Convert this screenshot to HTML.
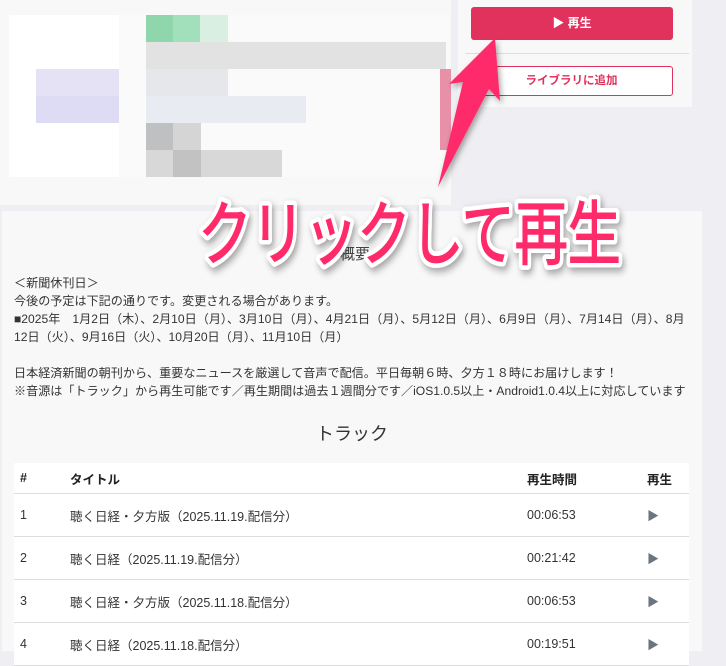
<!DOCTYPE html>
<html><head><meta charset="utf-8"><style>
body{margin:0;width:726px;height:648px;overflow:hidden;background:#eeeef3;font-family:"Liberation Sans","Noto Sans CJK JP",sans-serif;color:#333;position:relative}
.abs{position:absolute}
.card{background:#f8f8f8}
.c{position:absolute;width:28px;height:27px}
.txt{font-size:12.1px;line-height:18px;color:#333;white-space:nowrap}
table{border-collapse:collapse;background:#fff;font-size:12.5px;table-layout:fixed}
td,th{text-align:left;padding:0 6px;border-bottom:1px solid #ddd}
th{height:30px;font-weight:bold;color:#222}
td{height:42px}
.pl{color:#6b7580;font-size:12px}
</style></head><body>
<div class="abs card" style="left:0;top:0;width:451px;height:205px"></div>
<div class="abs card" style="left:458px;top:0;width:234px;height:107px"></div>
<div class="abs" style="left:9px;top:15px;width:440px;height:162px;background:#fafafa"></div>
<div class="c" style="left:9px;top:15px;width:110px;height:162px;background:#fff"></div>
<div class="c" style="left:146px;top:15px;background:#8fd6ad"></div>
<div class="c" style="left:173px;top:15px;background:#a2e0bc"></div>
<div class="c" style="left:200px;top:15px;background:#d9efe1"></div>
<div class="c" style="left:146px;top:42px;width:300px;background:#e2e2e2"></div>
<div class="c" style="left:36px;top:69px;width:83px;background:#e4e2f4"></div>
<div class="c" style="left:36px;top:96px;width:83px;background:#dedcf4"></div>
<div class="c" style="left:146px;top:69px;width:82px;background:#e6e7ea"></div>
<div class="c" style="left:146px;top:96px;width:160px;background:#e8ecf2"></div>
<div class="c" style="left:146px;top:123px;background:#bfc0c2"></div>
<div class="c" style="left:173px;top:123px;background:#d5d5d5"></div>
<div class="c" style="left:146px;top:150px;width:136px;background:#d8d8d8"></div>
<div class="c" style="left:173px;top:150px;background:#c2c2c2"></div>
<div class="c" style="left:440px;top:69px;width:11px;height:81px;background:#e890a8"></div>
<div class="abs" style="left:471px;top:7px;width:202px;height:33px;background:#e0325c;border-radius:3px;color:#fff;font-size:12px;font-weight:bold;text-align:center;line-height:33px">▶ 再生</div>
<div class="abs" style="left:465px;top:53px;width:224px;height:1px;background:#ddd"></div>
<div class="abs" style="left:470px;top:66px;width:201px;height:28px;border:1px solid #e0325c;border-radius:3px;background:#fff;color:#e0325c;font-size:11.5px;font-weight:bold;text-align:center;line-height:28px">ライブラリに追加</div>
<div class="abs card" style="left:2px;top:211px;width:700px;height:440px"></div>
<div class="abs" style="left:340px;top:243px;font-size:15px;color:#444">概要</div>
<div class="abs txt" style="left:14px;top:274px">＜新聞休刊日＞<br>今後の予定は下記の通りです。変更される場合があります。<br>■2025年　1月2日（木）、2月10日（月）、3月10日（月）、4月21日（月）、5月12日（月）、6月9日（月）、7月14日（月）、8月<br>12日（火）、9月16日（火）、10月20日（月）、11月10日（月）<br><br>日本経済新聞の朝刊から、重要なニュースを厳選して音声で配信。平日毎朝６時、夕方１８時にお届けします！<br>※音源は「トラック」から再生可能です／再生期間は過去１週間分です／iOS1.0.5以上・Android1.0.4以上に対応しています</div>
<div class="abs" style="left:316px;top:420px;font-size:18px;color:#333">トラック</div>
<table class="abs" style="left:14px;top:463px;width:675px">
<colgroup><col style="width:50px"><col><col style="width:120px"><col style="width:48px"></colgroup>
<tr><th>#</th><th>タイトル</th><th>再生時間</th><th>再生</th></tr>
<tr><td>1</td><td>聴く日経・夕方版（2025.11.19.配信分）</td><td>00:06:53</td><td class="pl">▶</td></tr>
<tr><td>2</td><td>聴く日経（2025.11.19.配信分）</td><td>00:21:42</td><td class="pl">▶</td></tr>
<tr><td>3</td><td>聴く日経・夕方版（2025.11.18.配信分）</td><td>00:06:53</td><td class="pl">▶</td></tr>
<tr><td>4</td><td>聴く日経（2025.11.18.配信分）</td><td>00:19:51</td><td class="pl">▶</td></tr>
</table>
<svg class="abs" style="left:0;top:0" width="726" height="648">
<defs><filter id="s" x="-20%" y="-20%" width="140%" height="140%"><feDropShadow dx="2" dy="3" stdDeviation="3" flood-color="#000" flood-opacity="0.35"/></filter></defs>
<polygon points="495,38 500,101 489,89 438,187 463,82 449,84" fill="#ff2a6a" filter="url(#s)"/>
<g transform="translate(198,259) scale(1,1.3)">
<text x="0" y="0" font-family="Liberation Sans, Noto Sans CJK JP, sans-serif" font-size="54" font-weight="500" fill="#ff2a6a" stroke="#fff" stroke-width="7" paint-order="stroke" stroke-linejoin="round" filter="url(#s)" letter-spacing="-1">クリックして再生</text>
</g>
</svg>
</body></html>
